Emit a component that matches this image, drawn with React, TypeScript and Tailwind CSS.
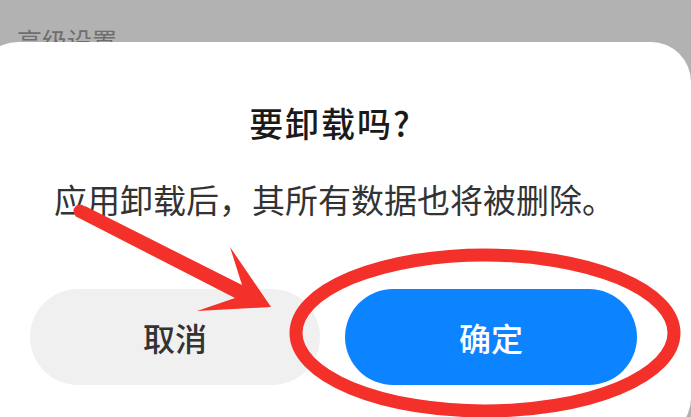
import React from 'react';

const cjk = { fontFamily: '"Noto Sans CJK SC", "Noto Sans", sans-serif' };

const App: React.FC = () => {
  return (
    <div className="relative w-[691px] h-[417px] overflow-hidden bg-[#b2b2b2]" style={cjk}>
      <div className="h-[42px] overflow-hidden pl-[17px] pt-[25px]">
        <span className="block text-[25px] leading-[30px] text-[#6e6e6e]">高级设置</span>
      </div>
      <div className="-ml-[22px] w-[713px] h-[396px] rounded-[40px] bg-white flex flex-col items-center">
        <h1 className="mt-[61px] pr-[8px] text-[34px] leading-[40px] font-medium tracking-[2px] text-[#1a1a1a]">要卸载吗?</h1>
        <p className="mt-[34px] text-[33px] leading-[44px] text-[#333333] whitespace-nowrap">应用卸载后{'\uFF0C'}其所有数据也将被删除。</p>
        <div className="mt-[68px] w-full flex gap-[25px] pl-[52px]">
          <button className="w-[290px] h-[96px] rounded-full bg-[#f0f0f0] text-[32px] font-medium text-[#333333]">取消</button>
          <button className="w-[292px] h-[96px] rounded-full bg-[#0d84ff] text-[32px] font-medium text-white">确定</button>
        </div>
      </div>
      <svg className="absolute inset-0" width="691" height="417" viewBox="0 0 691 417">
        <ellipse cx="485" cy="333" rx="189" ry="78" fill="none" stroke="#f4302a" strokeWidth="13" />
        <circle cx="80" cy="211" r="6.5" fill="#f4302a" />
        <polygon points="75,216 85,206 242,285 230,247 271,307 197,311 235,298" fill="#f4302a" />
      </svg>
    </div>
  );
};

export default App;
